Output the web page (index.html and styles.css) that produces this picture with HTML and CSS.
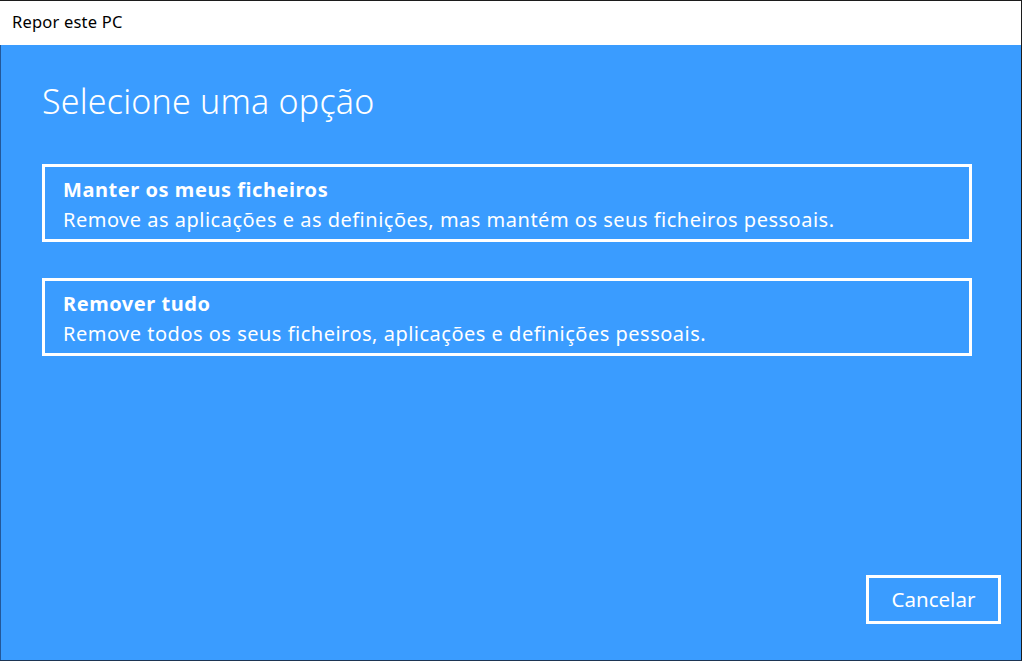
FILE: index.html
```html
<!DOCTYPE html>
<html lang="pt">
<head>
<meta charset="utf-8">
<title>Repor este PC</title>
<link rel="stylesheet" href="styles.css">
</head>
<body>
<div class="window">
  <div class="titlebar">Repor este PC</div>
  <main class="content">
    <h1 class="heading">Selecione uma opção</h1>
    <div class="options">
      <button class="option">
        <span class="option-title">Manter os meus ficheiros</span>
        <span class="option-desc">Remove as aplicações e as definições, mas mantém os seus ficheiros pessoais.</span>
      </button>
      <button class="option">
        <span class="option-title">Remover tudo</span>
        <span class="option-desc">Remove todos os seus ficheiros, aplicações e definições pessoais.</span>
      </button>
    </div>
    <div class="footer">
      <button class="cancel">Cancelar</button>
    </div>
  </main>
</div>
</body>
</html>
```

FILE: styles.css
```css
html, body {
  margin: 0;
  padding: 0;
  height: 100%;
}
body {
  font-family: "Noto Sans", "Open Sans", sans-serif;
  background: #ffffff;
}
.window {
  box-sizing: border-box;
  width: 1022px;
  height: 661px;
  display: flex;
  flex-direction: column;
  border-top: 1px solid #1c1c1c;
  border-right: 1px solid #1c1c1c;
  border-bottom: 1px solid #1d3553;
}
.titlebar {
  height: 44px;
  box-sizing: border-box;
  padding: 9px 0 0 12px;
  font-size: 16.5px;
  letter-spacing: 0.2px;
  color: #000;
  background: #fff;
}
.content {
  flex: 1;
  display: flex;
  flex-direction: column;
  background: #3a9cff;
  border-left: 1px solid #23589a;
  padding: 0 49px 0 41px;
  color: #fff;
}
.heading {
  margin: 28px 0 0 0;
  font-weight: 300;
  font-size: 34px;
  line-height: 56px;
  letter-spacing: 0.2px;
}
.options {
  margin-top: 35px;
  display: flex;
  flex-direction: column;
  gap: 36px;
}
.option {
  box-sizing: border-box;
  height: 78px;
  border: 3px solid #fff;
  background: transparent;
  color: #fff;
  display: flex;
  flex-direction: column;
  align-items: flex-start;
  justify-content: center;
  padding: 3px 0 0 18px;
  text-align: left;
  font-family: inherit;
}
.option-title {
  font-weight: 700;
  font-size: 20px;
  line-height: 30px;
  letter-spacing: 0.55px;
}
.option-desc {
  font-size: 20px;
  line-height: 30px;
  letter-spacing: 0.5px;
}
.footer {
  margin-top: auto;
  margin-bottom: 36px;
  display: flex;
  justify-content: flex-end;
  margin-right: -29px;
}
.cancel {
  box-sizing: border-box;
  width: 135px;
  height: 49px;
  border: 3px solid #fff;
  background: transparent;
  color: #fff;
  font-family: inherit;
  font-size: 20.5px;
  padding: 0 0 2px 0;
}
```
